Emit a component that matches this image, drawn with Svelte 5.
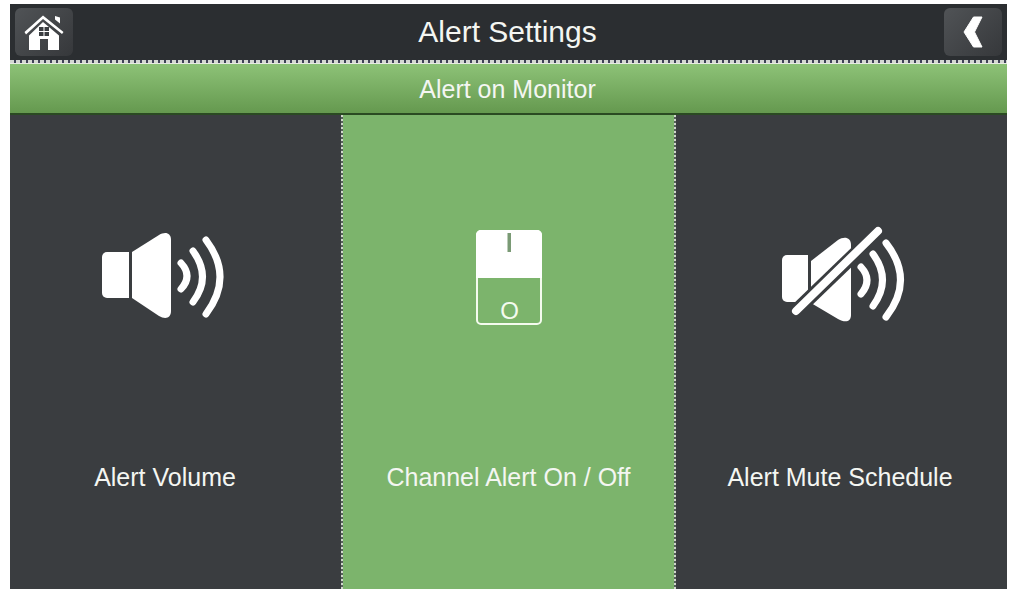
<script>
  const tiles = [
    { id: 'volume', label: 'Alert Volume' },
    { id: 'channel', label: 'Channel Alert On / Off', active: true },
    { id: 'mute', label: 'Alert Mute Schedule' },
  ];
</script>

<div class="screen">
  <header class="topbar">
    <button class="nav-btn" aria-label="Home">
      <svg width="44" height="40" viewBox="0 0 44 40">
        <path d="M33 4l5 1.500V11.500L33 7.500z" fill="#fff" />
        <path d="M2.500 20 21 3.500 41.500 20 40 22 21 7 4 22.500z" fill="#fff" />
        <path d="M21 10 37 23.500V38H26V27h-8v11H7V23.500z" fill="#fff" />
        <path d="M17 15h4.500v4H17zM22.500 15H27v4h-4.500zM17 20h4.500v4H17zM22.500 20H27v4h-4.500z" fill="#3a3d40" />
      </svg>
    </button>
    <h1>Alert Settings</h1>
    <button class="nav-btn" aria-label="Back">
      <svg width="20" height="34" viewBox="0 0 20 34">
        <path d="M19 2H10.500L1 17l9.500 15H19L11.500 17z" fill="#fff" stroke="#fff" stroke-linejoin="round" />
      </svg>
    </button>
  </header>
  <div class="rule"></div>

  <div class="subbar">Alert on Monitor</div>

  <div class="tiles">
    {#each tiles as tile}
      <div class="tile {tile.id}" class:active={tile.active}>
        <div class="icon">
          {#if tile.id === 'volume'}
            <svg width="145" height="110" viewBox="0 0 145 110">
              <path d="M17 32h22v46H17a5 5 0 0 1-5-5V37a5 5 0 0 1 5-5z" fill="#fff" />
              <path d="M42 32 69 15c6-3.500 12-2.500 12 5v71c0 7.500-6 8.500-12 5L42 78z" fill="#fff" />
              <g fill="none" stroke="#fff" stroke-linecap="round" stroke-width="7">
                <path d="M91 43Q103 56 91 69" />
                <path d="M103 31Q122 57 103 82" />
                <path d="M116 20Q144 57 116 94" />
              </g>
            </svg>
          {:else if tile.id === 'channel'}
            <svg width="90" height="115" viewBox="0 0 90 115">
              <rect x="13" y="11" width="64" height="93" rx="4" fill="none" stroke="#f4fbef" stroke-width="2" />
              <path d="M17 10h56a5 5 0 0 1 5 5v43H12V15a5 5 0 0 1 5-5z" fill="#fff" />
              <rect x="43.500" y="13" width="3.500" height="19" fill="#7a9a75" />
              <text class="off-mark" x="45.500" y="99" text-anchor="middle">O</text>
            </svg>
          {:else}
            <svg width="145" height="110" viewBox="0 0 145 110">
              <path d="M17 35h21v47H17a5 5 0 0 1-5-5V40a5 5 0 0 1 5-5z" fill="#fff" />
              <path d="M41 41 68 20c6-4 13-3 13 5v70c0 7-6 8-13 4L41 83z" fill="#fff" />
              <g fill="none" stroke="#fff" stroke-linecap="round" stroke-width="7">
                <path d="M91 47Q103 60 91 74" />
                <path d="M103 34Q122 60 103 86" />
                <path d="M116 23Q145 60 116 97" />
              </g>
              <path d="M28 89 111 9" stroke="#3a3d40" stroke-width="14" />
              <path d="M26 91 108 11" stroke="#fff" stroke-width="8" stroke-linecap="round" />
            </svg>
          {/if}
        </div>
        <div class="label">{tile.label}</div>
      </div>
    {/each}
  </div>
</div>

<style>
  :global(body) {
    background: #fff;
  }

  .screen {
    width: 997px;
    height: 585px;
    margin: 4px 0 0 10px;
    display: flex;
    flex-direction: column;
    font-family: "Liberation Sans", Arial, sans-serif;
    color: #f4f6f2;
  }

  .topbar {
    height: 56px;
    flex-shrink: 0;
    display: flex;
    align-items: center;
    justify-content: space-between;
    padding: 0 5px;
    background: #2b2e31;
  }

  .topbar h1 {
    margin: 0 2px 0 0;
    font-size: 30px;
    font-weight: 400;
    color: #f4f6f2;
  }

  .nav-btn {
    width: 58px;
    height: 48px;
    padding: 0;
    display: flex;
    align-items: center;
    justify-content: center;
    border: none;
    border-radius: 6px;
    background: linear-gradient(135deg, #505356, #36383b);
  }

  .rule {
    height: 3px;
    flex-shrink: 0;
    border-bottom: 1px solid #e8ebe4;
    background: repeating-linear-gradient(90deg, #d4d8d2 0 4px, #3f4258 4px 6px);
    box-sizing: content-box;
  }

  .subbar {
    height: 47px;
    padding: 2px 2px 0 0;
    flex-shrink: 0;
    display: flex;
    align-items: center;
    justify-content: center;
    font-size: 25px;
    background: linear-gradient(#8dc277, #65994f);
    border-bottom: 2px solid #2a4a22;
    box-sizing: content-box;
  }

  .tiles {
    flex: 1;
    display: grid;
    grid-template-columns: 331px 335px 331px;
    background: #3a3d40;
  }

  .tile {
    display: flex;
    flex-direction: column;
    align-items: center;
    padding-top: 105px;
    box-sizing: border-box;
  }

  .tile.volume {
    padding-right: 21px;
  }

  .tile.mute {
    padding-right: 3px;
  }

  .tile.active {
    background:
      repeating-linear-gradient(180deg, #d0d8cc 0 2px, #56605a 2px 4px) left / 2px 100% no-repeat,
      repeating-linear-gradient(180deg, #d0d8cc 0 2px, #56605a 2px 4px) right / 2px 100% no-repeat,
      #7cb46c;
  }

  .icon {
    height: 110px;
    margin-bottom: 133px;
    display: flex;
    justify-content: center;
  }

  .volume .icon {
    margin-left: -5px;
  }

  .mute .icon {
    margin-left: 5px;
  }

  .off-mark {
    font-size: 24px;
    fill: #f4fbef;
  }

  .label {
    font-size: 25px;
    line-height: 28px;
    white-space: nowrap;
  }
</style>
